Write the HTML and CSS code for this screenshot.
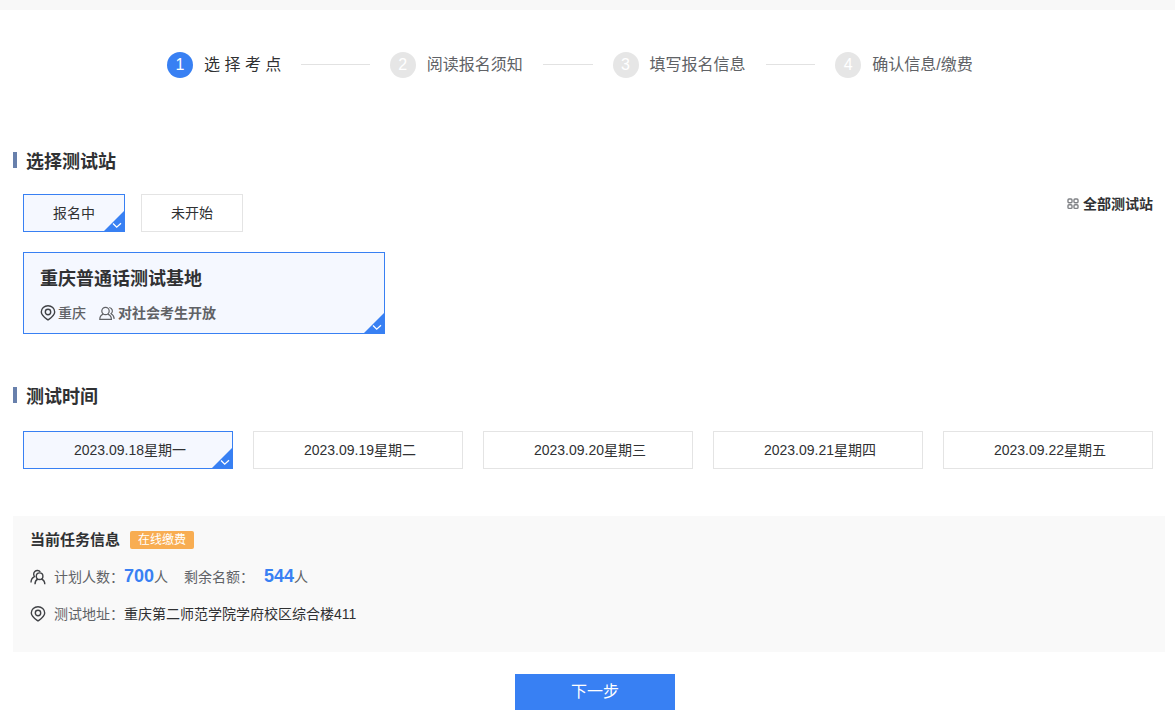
FILE: index.html
```html
<!DOCTYPE html>
<html lang="zh-CN">
<head>
<meta charset="utf-8">
<meta name="viewport" content="width=device-width, initial-scale=1">
<title>选择考点</title>
<link rel="stylesheet" href="styles.css">
</head>
<body>
<svg class="symbols" aria-hidden="true">
  <symbol id="pin" viewBox="0 0 16 16"><path d="M8 15C5 12.800 1.300 10.500 1.300 7a6.700 6.300 0 0 1 13.400 0c0 3.500-3.700 5.800-6.700 8z"/><circle cx="8" cy="7" r="2.700"/></symbol>
  <symbol id="check" viewBox="0 0 22 22"><path class="corner" d="M22 0v22H0z"/><path class="tick" d="M10 13.500l3.700 3.700 4.300-4"/></symbol>
</svg>
<header class="topbar"></header>
<main class="page">
  <ol class="steps">
    <li class="step current"><span class="num">1</span><span>选 择 考 点</span></li>
    <li class="step"><span class="num">2</span><span>阅读报名须知</span></li>
    <li class="step"><span class="num">3</span><span>填写报名信息</span></li>
    <li class="step"><span class="num">4</span><span>确认信息/缴费</span></li>
  </ol>

  <section class="stations">
    <h2 class="title">选择测试站</h2>
    <div class="filters">
      <div class="tabs">
        <button type="button" class="option selected" aria-pressed="true">报名中<svg class="check" aria-hidden="true"><use href="#check"/></svg></button>
        <button type="button" class="option" aria-pressed="false">未开始</button>
      </div>
      <a class="all" href="#"><svg class="grid" viewBox="0 0 12 12" aria-hidden="true"><rect x="1" y="1" width="4" height="3.700" rx="1"/><rect x="7" y="1" width="4" height="3.700" rx="1"/><rect x="1" y="6.700" width="4" height="3.700" rx="1"/><rect x="7" y="6.700" width="4" height="3.700" rx="1"/></svg>全部测试站</a>
    </div>
    <button type="button" class="card selected" aria-pressed="true">
      <span class="name">重庆普通话测试基地</span>
      <span class="meta">
        <svg class="icon" aria-hidden="true"><use href="#pin"/></svg><span class="city">重庆</span>
        <svg class="icon soft" viewBox="0 0 16 16" aria-hidden="true"><circle cx="6.500" cy="6" r="3.700"/><path d="M4.200 9.100C2 10 .8 11.800.8 14.300h11.600c0-2.500-1.400-4.300-3.600-5.200M10.300 2.500a3.500 3.500 0 0 1 1.800 6.200c1.900.9 2.900 2.700 3.100 5.200"/></svg><span>对社会考生开放</span>
      </span>
      <svg class="check" aria-hidden="true"><use href="#check"/></svg>
    </button>
  </section>

  <section class="times">
    <h2 class="title">测试时间</h2>
    <div class="dates">
      <button type="button" class="option selected" aria-pressed="true">2023.09.18星期一<svg class="check" aria-hidden="true"><use href="#check"/></svg></button>
      <button type="button" class="option" aria-pressed="false">2023.09.19星期二</button>
      <button type="button" class="option" aria-pressed="false">2023.09.20星期三</button>
      <button type="button" class="option" aria-pressed="false">2023.09.21星期四</button>
      <button type="button" class="option" aria-pressed="false">2023.09.22星期五</button>
    </div>
  </section>

  <section class="task">
    <div class="task-head"><h3 class="task-title">当前任务信息</h3><span class="tag">在线缴费</span></div>
    <div class="row">
      <svg class="icon" viewBox="0 0 16 16" aria-hidden="true"><path d="M5 8A3.700 3.700 0 1 1 10.300 2.900M4.500 7.600C2.200 8.700 1 10.500 1 13.500M7.800 10C5.900 10.900 5 12.800 5 15.300M11.400 10c2.200.9 3.400 2.800 3.400 5.300"/><circle cx="9.600" cy="7.200" r="3.300"/></svg>
      <span class="label">计划人数：</span><span class="count"><b>700</b>人</span>
      <span class="label left">剩余名额：</span><span class="count"><b>544</b>人</span>
    </div>
    <div class="row">
      <svg class="icon" aria-hidden="true"><use href="#pin"/></svg>
      <span class="label">测试地址：</span><span>重庆第二师范学院学府校区综合楼411</span>
    </div>
  </section>

  <div class="actions"><button type="button" class="next">下一步</button></div>
</main>
</body>
</html>
```
FILE: styles.css
```css
* { box-sizing: border-box; }

body {
  margin: 0;
  background: #fff;
  color: #303133;
  font: 14px/20px "Liberation Sans", "Noto Sans CJK SC", sans-serif;
}

button { font: inherit; color: inherit; cursor: pointer; }

.symbols { position: absolute; width: 0; height: 0; }
.topbar { height: 10px; background: #f8f8f8; }
.page { padding: 42px 10px 13px 13px; }

.steps {
  display: grid;
  grid-template-columns: repeat(4, 1fr);
  margin: 0;
  padding: 0 107px 0 154px;
  list-style: none;
  font-size: 16px;
  line-height: 26px;
  color: #606266;
}
.step { display: flex; align-items: center; white-space: nowrap; }
.current { color: #303133; }
.num {
  width: 26px;
  height: 26px;
  margin-right: 11px;
  border-radius: 50%;
  background: #e6e6e6;
  color: #fff;
  text-align: center;
}
.current .num { background: #3880f3; }
.step:not(:last-child)::after {
  content: "";
  flex: 1;
  height: 1px;
  margin: 0 20px 2px;
  background: #e2e2e2;
}

.title {
  display: flex;
  align-items: center;
  gap: 9px;
  margin: 0;
  font-size: 18px;
  line-height: 24px;
}
.title::before {
  content: "";
  width: 4px;
  height: 16px;
  margin-bottom: 4px;
  background: #6880ac;
}

.stations { padding-top: 72px; }
.filters {
  display: flex;
  justify-content: space-between;
  padding: 20px 12px 20px 10px;
}
.tabs { display: flex; gap: 16px; }
.tabs .option { width: 102px; }

.option {
  position: relative;
  height: 38px;
  padding: 0;
  border: 1px solid #e4e4e4;
  background: #fff;
}
.selected { border-color: #3880f3; background: #f5f8ff; }

.check { position: absolute; right: -1px; bottom: -1px; width: 22px; height: 22px; }
.corner { fill: #3880f3; }
.tick { fill: none; stroke: #fff; stroke-width: 1.3; }

.all {
  display: flex;
  align-items: center;
  align-self: flex-start;
  gap: 4px;
  color: #303133;
  font-weight: bold;
  text-decoration: none;
}
.grid { width: 12px; height: 12px; fill: none; stroke: #808286; stroke-width: 1.4; }

.card {
  position: relative;
  display: flex;
  flex-direction: column;
  gap: 12px;
  width: 362px;
  height: 82px;
  margin-left: 10px;
  padding: 14px 16px;
  border: 1px solid #3880f3;
  text-align: left;
}
.name { font-size: 18px; line-height: 24px; font-weight: bold; }
.meta { display: flex; align-items: center; color: #606266; font-weight: bold; }
.city { margin-right: 13px; font-weight: 500; }
.icon { width: 16px; height: 16px; fill: none; stroke: #404246; stroke-width: 1.4; }
.meta .icon { margin-right: 2px; }
.meta .soft { margin-right: 3px; stroke: #606266; stroke-width: 1.2; }

.times { padding-top: 51px; }
.dates {
  display: grid;
  grid-template-columns: repeat(5, 1fr);
  gap: 20px;
  padding: 22px 12px 47px 10px;
}
.dates .option { padding-left: 4px; }

.task {
  display: flex;
  flex-direction: column;
  gap: 16px;
  padding: 14px 17px 28px;
  background: #f9f9f9;
}
.task-head { display: flex; align-items: center; gap: 10px; }
.task-title { margin: 0; font-size: 15px; line-height: 20px; }
.tag {
  padding: 0 8px;
  border-radius: 2px;
  background: #f8ad52;
  color: #fff;
  font-size: 12px;
  line-height: 18px;
}
.row { display: flex; align-items: center; min-height: 21px; line-height: 20px; }
.row .icon { margin-right: 8px; }
.label, .count { color: #606266; }
.left { margin: 0 10px 0 16px; }
.count b { color: #3880f3; font-size: 18px; }

.actions { display: flex; justify-content: center; padding: 22px 0 0 12px; }
.next {
  width: 160px;
  height: 36px;
  padding: 0;
  border: 0;
  background: #3880f3;
  color: #fff;
  font-size: 16px;
}
```
